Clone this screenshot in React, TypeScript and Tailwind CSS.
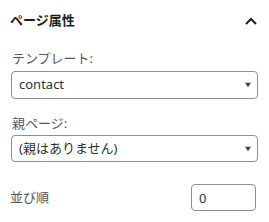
import React, { useState } from 'react';

const font = { fontFamily: '"Noto Sans", "Noto Sans CJK JP", sans-serif' };

const Arrow: React.FC = () => (
  <svg className="pointer-events-none absolute right-[7px] top-1/2 -translate-y-1/2" width="6" height="5" viewBox="0 0 6 5">
    <path d="M0 0h6L3 5z" fill="#3c434a" />
  </svg>
);

const App: React.FC = () => {
  const [template, setTemplate] = useState('contact');
  const [parent, setParent] = useState('');
  const [order, setOrder] = useState('0');

  return (
    <div className="w-[269px] h-[222px] bg-white" style={font}>
      <div className="flex items-center justify-between h-[42px] pl-[10px] pr-[12px]">
        <h2 className="text-[13px] font-bold text-[#1e1e1e]">ページ属性</h2>
        <svg width="12" height="8" viewBox="0 0 12 8">
          <path d="M1 7l5-5 5 5" fill="none" stroke="#1e1e1e" strokeWidth="2" />
        </svg>
      </div>
      <div className="px-[11px] pt-[7px]">
        <label className="block pl-[1px] text-[13px] leading-[18px] text-[#50575e] mb-[4px]">テンプレート:</label>
        <div className="relative">
          <select
            value={template}
            onChange={(e) => setTemplate(e.target.value)}
            className="appearance-none w-[247px] h-[28px] border border-[#8c8f94] rounded-[4px] pl-[7px] text-[13px] text-[#2c3338] bg-white outline-none"
          >
            <option value="default">デフォルトテンプレート</option>
            <option value="contact">contact</option>
          </select>
          <Arrow />
        </div>
        <label className="block pl-[1px] mt-[15px] text-[13px] leading-[18px] text-[#50575e] mb-[3px]">親ページ:</label>
        <div className="relative">
          <select
            value={parent}
            onChange={(e) => setParent(e.target.value)}
            className="appearance-none w-[247px] h-[27px] border border-[#8c8f94] rounded-[4px] pl-[7px] text-[13px] text-[#2c3338] bg-white outline-none"
          >
            <option value="">(親はありません)</option>
          </select>
          <Arrow />
        </div>
        <div className="flex items-center justify-between mt-[22px] pr-[2px]">
          <label className="text-[13px] text-[#50575e] -ml-[1px]">並び順</label>
          <input
            type="text"
            value={order}
            onChange={(e) => setOrder(e.target.value)}
            className="w-[65px] h-[27px] border border-[#8c8f94] rounded-[4px] pl-[7px] text-[13px] text-[#2c3338] outline-none"
          />
        </div>
      </div>
    </div>
  );
};

export default App;
